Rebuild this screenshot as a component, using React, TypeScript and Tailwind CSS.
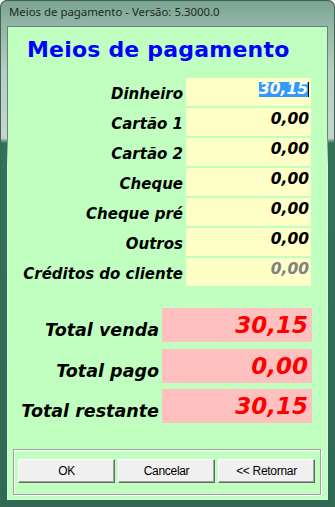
const rows = [
  { label: 'Dinheiro', value: '30,15', selected: true },
  { label: 'Cartão 1', value: '0,00' },
  { label: 'Cartão 2', value: '0,00' },
  { label: 'Cheque', value: '0,00' },
  { label: 'Cheque pré', value: '0,00' },
  { label: 'Outros', value: '0,00' },
  { label: 'Créditos do cliente', value: '0,00', disabled: true },
]

const totals = [
  { label: 'Total venda', value: '30,15', space: 'mt-[22px]' },
  { label: 'Total pago', value: '0,00', space: 'mt-[7px]' },
  { label: 'Total restante', value: '30,15', space: 'mt-[6px]' },
]

const buttons = ['OK', 'Cancelar', '<< Retornar']

function PaymentRow({ label, value, selected, disabled }: { label: string; value: string; selected?: boolean; disabled?: boolean }) {
  return (
    <div className="flex items-start gap-[3px] h-[28px]">
      <div className="flex-1 text-right text-[15px] font-bold italic leading-[24px] pt-[4px] text-black whitespace-nowrap">
        {label}
      </div>
      {selected ? (
        <div className="w-[125px] h-[28px] bg-[#ffffc8] flex justify-end pr-[2px] pt-[4px]">
          <span className="inline-block h-[15px] leading-[15px] bg-[#3399ff] text-white text-[15.5px] font-bold italic">
            {value}
          </span>
          <span className="inline-block w-px h-[15px] bg-black" />
        </div>
      ) : (
        <div
          className={`w-[125px] h-[28px] bg-[#ffffc8] text-right pr-[2px] pt-[2px] text-[15.5px] leading-[18px] font-bold italic ${disabled ? 'text-[#808080]' : 'text-black'}`}
        >
          {value}
        </div>
      )}
    </div>
  )
}

export default function App() {
  return (
    <div className="w-[335px] h-[507px] overflow-hidden rounded-t-[7px] bg-[linear-gradient(180deg,#7aa491_0px,#93b6a6_26px,#b7cdc2_70px,#c6d6ce_138px,#2f7459_143px,#2b6b52_100%)] shadow-[inset_0_0_0_1px_#3f6355] font-['DejaVu_Sans',Verdana,sans-serif]">
      <div className="h-[26px] pl-[9px] pt-[4px] text-[11.4px] leading-[16px] text-[#1b2a24] font-['Noto_Sans',sans-serif] whitespace-nowrap">
        Meios de pagamento - Versão: 5.3000.0
      </div>
      <div className="mx-[7px] h-[474px] p-px bg-[linear-gradient(180deg,#62857a_0px,#62857a_110px,#e4f1ea_140px,#e4f1ea_100%)]">
        <div className="h-full bg-[#c0ffc0] flex flex-col">
          <div className="h-[51px] pl-[19px] pt-[11px] text-[22px] leading-[24px] font-bold text-[#0000ff] tracking-[0.2px] whitespace-nowrap">
            Meios de pagamento
          </div>
          <div className="flex flex-col gap-[2px] pr-[16px]">
            {rows.map((r) => (
              <PaymentRow key={r.label} {...r} />
            ))}
          </div>
          <div className="flex flex-col pr-[15px]">
            {totals.map((t) => (
              <div key={t.label} className={`flex items-start gap-[3px] h-[34px] ${t.space}`}>
                <div className="flex-1 text-right text-[17.5px] font-bold italic leading-[24px] pt-[10px] text-black whitespace-nowrap">
                  {t.label}
                </div>
                <div className="w-[150px] h-[34px] bg-[#ffc0c0] text-right pr-[4px] text-[23px] leading-[34px] font-bold italic text-[#ff0000]">
                  {t.value}
                </div>
              </div>
            ))}
          </div>
          <div className="ml-[5px] mt-[26px] w-[308px] h-[46px] border border-[#a0a0a0] shadow-[inset_1px_1px_0_#fff,1px_1px_0_#fff] flex gap-[3px] pl-[4px] pt-[9px]">
            {buttons.map((b) => (
              <button
                key={b}
                className="w-[97px] h-[24px] bg-[#f0f0f0] border border-t-white border-l-white border-r-[#696969] border-b-[#696969] shadow-[inset_-1px_-1px_0_#a0a0a0] text-[12px] text-black font-['Liberation_Sans',Arial,sans-serif] tracking-[-0.3px]"
              >
                {b}
              </button>
            ))}
          </div>
        </div>
      </div>
    </div>
  )
}
